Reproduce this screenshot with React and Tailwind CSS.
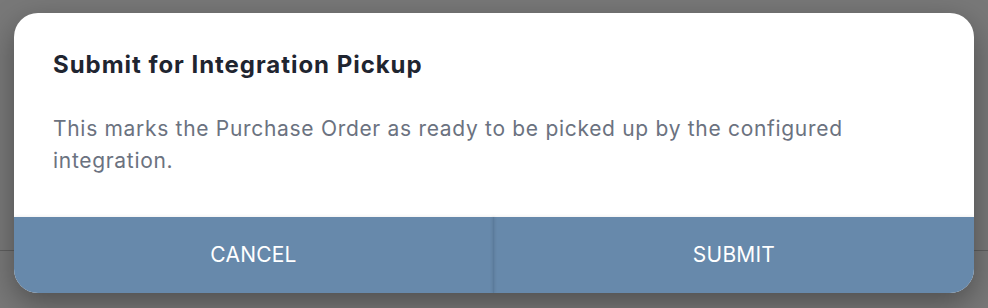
export default function App() {
  return (
    <div className="relative w-[988px] h-[308px] overflow-hidden bg-[#787878]" style={{ fontFamily: "Inter, 'Noto Sans', sans-serif" }}>
      <div className="absolute left-0 right-0 top-[250px] h-px bg-[#5f5f5f]" />
      <div className="absolute left-[14px] top-[13px] w-[960px] h-[280px] rounded-[24px] bg-white overflow-hidden flex flex-col shadow-[0_10px_30px_rgba(0,0,0,0.35)]">
        <div className="flex-1 px-[39px] pt-[36px]">
          <h2 className="text-[24px] leading-[32px] font-bold tracking-[0.04em] text-[#1f2530]">Submit for Integration Pickup</h2>
          <p className="mt-[32px] text-[21px] leading-[32px] tracking-[0.033em] text-[#6b7280]">
            This marks the Purchase Order as ready to be picked up by the configured integration.
          </p>
        </div>
        <div className="h-[76px] flex bg-[#6789ab] shadow-[0_-1px_3px_rgba(0,0,0,0.06)]">
          <button className="w-[479px] h-full text-white text-[21px] tracking-[0.01em]">CANCEL</button>
          <div className="w-px h-full bg-[#5b7b9c] shadow-[0_0_3px_rgba(0,0,0,0.25)]" />
          <button className="flex-1 h-full text-white text-[21px] tracking-[0.01em]">SUBMIT</button>
        </div>
      </div>
    </div>
  );
}
